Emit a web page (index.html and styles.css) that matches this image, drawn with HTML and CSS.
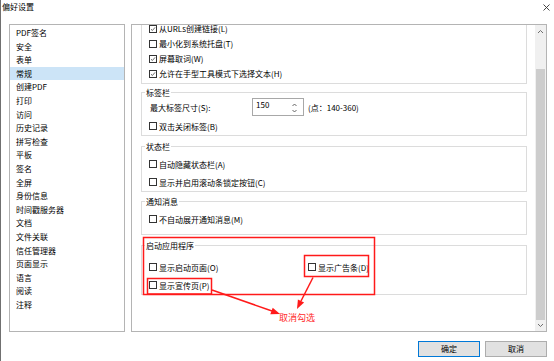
FILE: index.html
```
<!DOCTYPE html>
<html lang="zh-CN">
<head>
<meta charset="utf-8">
<title>偏好设置</title>
<link rel="stylesheet" href="styles.css">
</head>
<body>
<div class="window">
  <div class="titlebar">
    <span class="title">偏好设置</span>
    <svg class="close" width="7" height="7" viewBox="0 0 7 7"><path d="M0.5 0.5L6.5 6.5M6.5 0.5L0.5 6.5" stroke="#333" stroke-width="0.9" fill="none"/></svg>
  </div>
  <div class="main">
    <ul class="nav">
      <li>PDF签名</li>
      <li>安全</li>
      <li>表单</li>
      <li class="sel">常规</li>
      <li>创建PDF</li>
      <li>打印</li>
      <li>访问</li>
      <li>历史记录</li>
      <li>拼写检查</li>
      <li>平板</li>
      <li>签名</li>
      <li>全屏</li>
      <li>身份信息</li>
      <li>时间戳服务器</li>
      <li>文档</li>
      <li>文件关联</li>
      <li>信任管理器</li>
      <li>页面显示</li>
      <li>语言</li>
      <li>阅读</li>
      <li>注释</li>
    </ul>
    <div class="panel">
      <div class="content">
        <div class="group g1">
          <div class="row r15"><span class="cb on"><svg viewBox="0 0 8 8"><path d="M1.3 4.2L3.2 6L6.8 1.8" stroke="#222" stroke-width="0.9" fill="none"/></svg></span>从URLs创建链接(L)</div>
          <div class="row r15"><span class="cb"></span>最小化到系统托盘(T)</div>
          <div class="row r15"><span class="cb on"><svg viewBox="0 0 8 8"><path d="M1.3 4.2L3.2 6L6.8 1.8" stroke="#222" stroke-width="0.9" fill="none"/></svg></span>屏幕取词(W)</div>
          <div class="row r15"><span class="cb on"><svg viewBox="0 0 8 8"><path d="M1.3 4.2L3.2 6L6.8 1.8" stroke="#222" stroke-width="0.9" fill="none"/></svg></span>允许在手型工具模式下选择文本(H)</div>
        </div>
        <div class="group g2">
          <div class="legend">标签栏</div>
          <div class="row spinrow">
            <span class="lbl">最大标签尺寸(S):</span>
            <span class="spin"><span class="val">150</span>
              <svg class="arrows" width="7" height="14" viewBox="0 0 7 14"><path d="M1.5 5L3.5 3L5.5 5M1.5 9L3.5 11L5.5 9" stroke="#555" stroke-width="0.9" fill="none"/></svg>
            </span>
            <span class="hint">(点：140-360)</span>
          </div>
          <div class="row r18 mt1"><span class="cb"></span>双击关闭标签(B)</div>
        </div>
        <div class="group g3">
          <div class="legend">状态栏</div>
          <div class="row r18"><span class="cb"></span>自动隐藏状态栏(A)</div>
          <div class="row r18"><span class="cb"></span>显示并启用滚动条锁定按钮(C)</div>
        </div>
        <div class="group g4">
          <div class="legend">通知消息</div>
          <div class="row r18"><span class="cb"></span>不自动展开通知消息(M)</div>
        </div>
        <div class="group g5">
          <div class="legend">启动应用程序</div>
          <div class="grid2">
            <div class="row r18"><span class="cb"></span>显示启动页面(O)</div>
            <div class="row r18"><span class="cb"></span>显示广告条(D)</div>
            <div class="row r18"><span class="cb"></span>显示宣传页(P)</div>
          </div>
        </div>
      </div>
      <div class="scrollbar">
        <div class="sb-btn up"><svg width="7" height="5" viewBox="0 0 7 5"><path d="M1 4L3.5 1.5L6 4" stroke="#606060" stroke-width="0.9" fill="none"/></svg></div>
        <div class="thumb"></div>
        <div class="sb-btn down"><svg width="7" height="5" viewBox="0 0 7 5"><path d="M1 1L3.5 3.5L6 1" stroke="#606060" stroke-width="0.9" fill="none"/></svg></div>
      </div>
    </div>
  </div>
  <div class="footer">
    <button class="btn primary">确定</button>
    <button class="btn">取消</button>
  </div>
</div>
<svg class="annot" width="554" height="361" viewBox="0 0 554 361">
  <g fill="none" stroke="#ff1a1a" stroke-width="1.5">
    <rect x="143.5" y="237.5" width="231" height="57"/>
    <rect x="304.5" y="255.5" width="64" height="21"/>
    <rect x="147.5" y="278.5" width="64" height="15.5"/>
    <line x1="212" y1="290" x2="272" y2="311"/>
    <line x1="313" y1="277.5" x2="301" y2="301"/>
  </g>
  <g fill="#ff1a1a">
    <polygon points="280,314 272.7,307.7 270.3,314.3"/>
    <polygon points="297,309 304.1,302.6 297.9,299.4"/>
  </g>
</svg>
<span class="note">取消勾选</span>
</body>
</html>
```
FILE: styles.css
```
* { box-sizing: border-box; }
html, body { margin: 0; padding: 0; }
body {
  width: 554px;
  height: 361px;
  background: #ffffff;
  font-family: "Noto Sans CJK SC", "Microsoft YaHei", sans-serif;
  font-size: 8px;
  color: #000;
  position: relative;
  overflow: hidden;
}
.window {
  width: 554px;
  height: 361px;
  border-left: 1px solid #707070;
}
.titlebar {
  height: 24px;
  display: flex;
  justify-content: space-between;
  align-items: flex-start;
  padding-left: 1px;
  padding-right: 4px;
}
.title { line-height: 14px; display: block; }
.close { margin-top: 4px; }
.main {
  display: flex;
  height: 308px;
}
.nav {
  list-style: none;
  margin: 0 0 0 8px;
  padding: 1px 0 0 0;
  width: 116px;
  height: 308px;
  border: 1px solid #b4b4b4;
}
.nav li {
  height: 13.6px;
  line-height: 13.6px;
  padding-left: 6px;
  white-space: nowrap;
}
.nav li.sel { background: #cce4f7; }
.panel {
  margin-left: 6px;
  width: 416px;
  height: 308px;
  border: 1px solid #b4b4b4;
  display: flex;
}
.content {
  flex: 1;
  overflow: hidden;
  padding: 0 8px 0 9px;
}
.group {
  border: 1px solid #dcdcdc;
  padding-left: 7px;
}
.legend {
  width: fit-content;
  margin-top: -5px;
  margin-left: -4px;
  padding: 0 1px;
  height: 10px;
  line-height: 10px;
  background: #fff;
}
.g1 { border-top: none; margin-top: -4px; padding-bottom: 2px; }
.g2 { margin-top: 8px; padding-bottom: 0; }
.g3 { margin-top: 10px; padding-top: 0; }
.g3 .legend { margin-bottom: 3px; }
.g4 { margin-top: 9px; padding-bottom: 6px; }
.g4 .legend { margin-bottom: 3px; }
.g5 { margin-top: 10px; }
.g5 .legend { margin-bottom: 7px; }
.row {
  display: flex;
  align-items: center;
  white-space: nowrap;
}
.r15 { height: 15px; }
.r18 { height: 18px; }
.mt1 { margin-top: 1px; }
.cb {
  width: 8px;
  height: 8px;
  border: 1px solid #333;
  margin-right: 2px;
  flex: none;
  display: flex;
  background: #fff;
}
.cb svg { width: 6px; height: 6px; }
.spinrow { height: 18px; padding-left: 1px; }
.lbl { width: 102px; }
.spin {
  width: 52px;
  height: 18px;
  border: 1px solid #a8a8a8;
  display: flex;
  justify-content: space-between;
  align-items: flex-start;
  padding: 1px 5px 0 3px;
}
.val { line-height: 10px; }
.arrows { margin-top: 1px; }
.hint { margin-left: 4px; }
.grid2 {
  display: grid;
  grid-template-columns: 159px auto;
}
.scrollbar {
  width: 11px;
  background: #f0f0f0;
  display: flex;
  flex-direction: column;
  align-items: center;
}
.sb-btn {
  height: 13px;
  display: flex;
  align-items: center;
  justify-content: center;
  width: 11px;
}
.thumb {
  width: 9px;
  margin-top: 31px;
  height: 251px;
  background: #cdcdcd;
}
.down { margin-top: auto; height: 11px; }
.footer {
  display: flex;
  justify-content: flex-end;
  gap: 5px;
  margin-top: 9px;
  padding-right: 7px;
}
.btn {
  width: 62px;
  height: 16px;
  background: #e1e1e1;
  border: 1px solid #adadad;
  font-family: inherit;
  font-size: 8px;
  line-height: 12px;
  padding: 0;
  color: #000;
}
.btn.primary { border: 1.5px solid #0078d7; }
.annot {
  position: absolute;
  left: 0;
  top: 0;
  pointer-events: none;
}
.note {
  position: absolute;
  left: 279px;
  top: 312px;
  font-size: 9px;
  line-height: 12px;
  color: #ff2a2a;
}
```
